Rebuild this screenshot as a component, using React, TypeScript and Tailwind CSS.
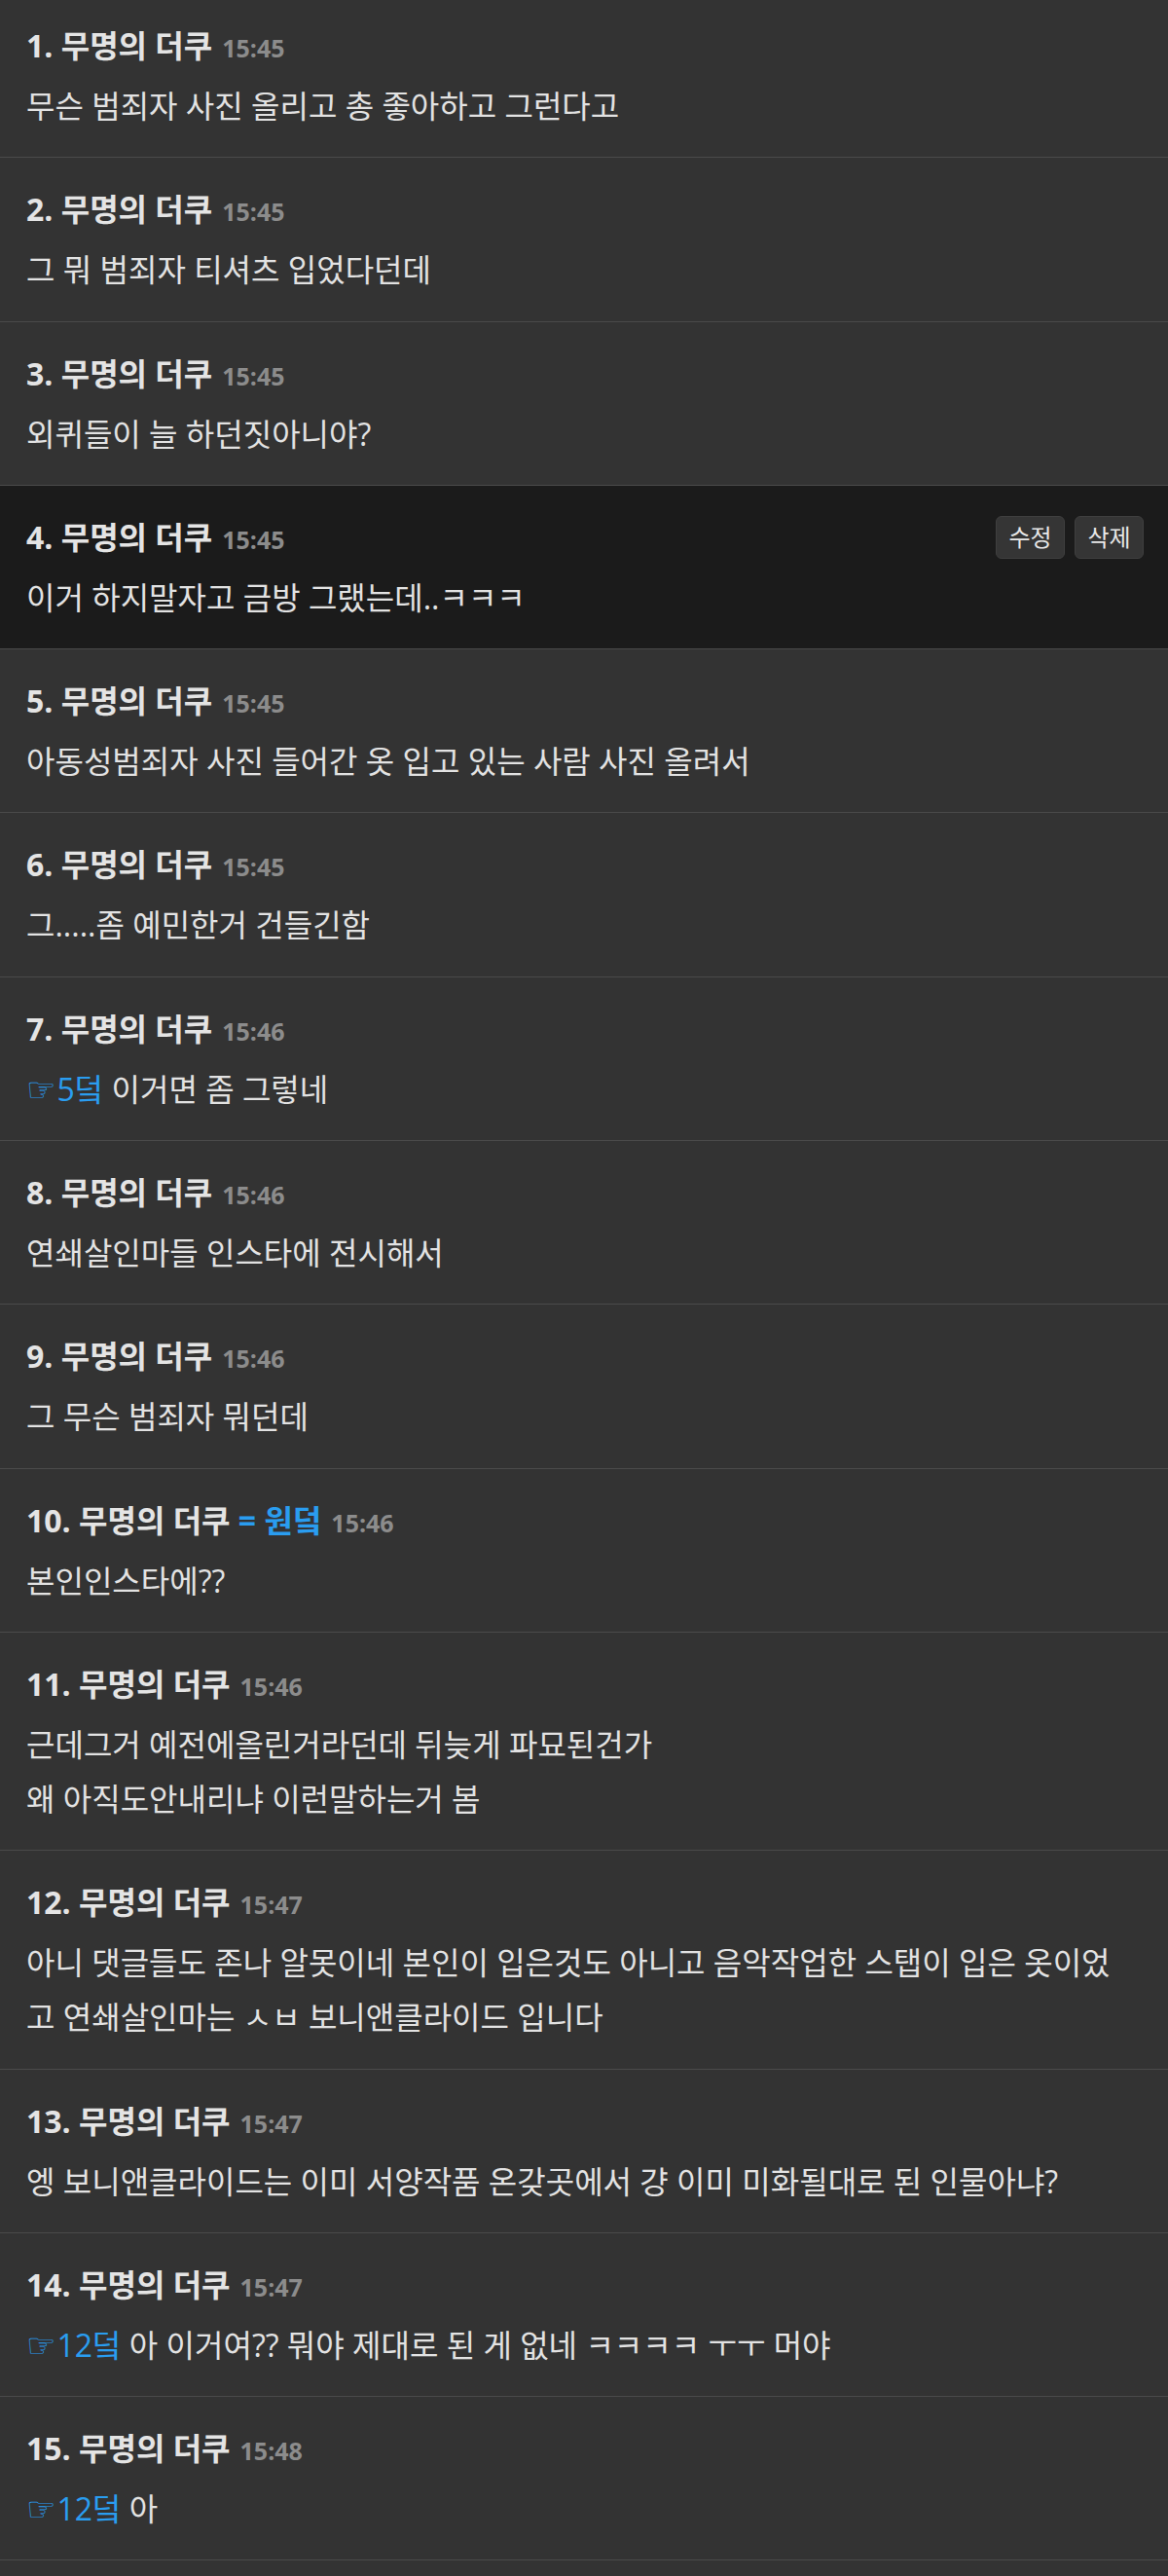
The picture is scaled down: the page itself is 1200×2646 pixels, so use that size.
import { Fragment } from "react";

type Part = string | { ref: string };

type Comment = {
  no: number;
  time: string;
  op?: boolean;
  mine?: boolean;
  body: Part[][];
};

const comments: Comment[] = [
  { no: 1, time: "15:45", body: [["무슨 범죄자 사진 올리고 총 좋아하고 그런다고"]] },
  { no: 2, time: "15:45", body: [["그 뭐 범죄자 티셔츠 입었다던데"]] },
  { no: 3, time: "15:45", body: [["외퀴들이 늘 하던짓아니야?"]] },
  { no: 4, time: "15:45", mine: true, body: [["이거 하지말자고 금방 그랬는데..ㅋㅋㅋ"]] },
  { no: 5, time: "15:45", body: [["아동성범죄자 사진 들어간 옷 입고 있는 사람 사진 올려서"]] },
  { no: 6, time: "15:45", body: [["그.....좀 예민한거 건들긴함"]] },
  { no: 7, time: "15:46", body: [[{ ref: "5덬" }, " 이거면 좀 그렇네"]] },
  { no: 8, time: "15:46", body: [["연쇄살인마들 인스타에 전시해서"]] },
  { no: 9, time: "15:46", body: [["그 무슨 범죄자 뭐던데"]] },
  { no: 10, time: "15:46", op: true, body: [["본인인스타에??"]] },
  {
    no: 11,
    time: "15:46",
    body: [["근데그거 예전에올린거라던데 뒤늦게 파묘된건가"], ["왜 아직도안내리냐 이런말하는거 봄"]],
  },
  {
    no: 12,
    time: "15:47",
    body: [
      ["아니 댓글들도 존나 알못이네 본인이 입은것도 아니고 음악작업한 스탭이 입은 옷이었"],
      ["고 연쇄살인마는 ㅅㅂ 보니앤클라이드 입니다"],
    ],
  },
  { no: 13, time: "15:47", body: [["엥 보니앤클라이드는 이미 서양작품 온갖곳에서 걍 이미 미화될대로 된 인물아냐?"]] },
  { no: 14, time: "15:47", body: [[{ ref: "12덬" }, " 아 이거여?? 뭐야 제대로 된 게 없네 ㅋㅋㅋㅋ ㅜㅜ 머야"]] },
  { no: 15, time: "15:48", body: [[{ ref: "12덬" }, " 아"]] },
];

function Line({ parts }: { parts: Part[] }) {
  return (
    <div className="h-[56px] leading-[56px] whitespace-nowrap">
      {parts.map((p, i) =>
        typeof p === "string" ? (
          <Fragment key={i}>{p}</Fragment>
        ) : (
          <span key={i} className="text-[#2a9df0]">
            <span className="font-['DejaVu_Sans'] text-[34px] leading-none mr-[1px]">☞</span>
            {p.ref}
          </span>
        )
      )}
    </div>
  );
}

function Row({ c }: { c: Comment }) {
  return (
    <div
      className={`border-b border-[#4a4a4a] pl-[27px] pr-[25px] pt-[30px] pb-[24.3px] ${
        c.mine ? "bg-[#1b1b1b]" : "bg-[#333333]"
      }`}
    >
      <div className="flex items-center justify-between h-[46px]">
        <div className="flex items-baseline gap-[10px]">
          <span className="text-[32px] font-bold text-[#e4e4e4]">
            {c.no}. 무명의 더쿠
            {c.op && <span className="text-[#2a9df0]"> = 원덬</span>}
          </span>
          <span className="text-[25px] font-bold text-[#8c8c8c]">{c.time}</span>
        </div>
        {c.mine && (
          <div className="flex gap-[10px]">
            <button className="h-[44px] w-[71px] rounded-[6px] border border-[#3f3f3f] bg-[#353535] text-[24px] text-[#e8e8e8]">
              수정
            </button>
            <button className="h-[44px] w-[71px] rounded-[6px] border border-[#3f3f3f] bg-[#353535] text-[24px] text-[#e8e8e8]">
              삭제
            </button>
          </div>
        )}
      </div>
      <div className="mt-[11px] text-[32px] text-[#e2e2e2]">
        {c.body.map((l, i) => (
          <Line key={i} parts={l} />
        ))}
      </div>
    </div>
  );
}

export default function App() {
  return (
    <div className="h-[2646px] bg-[#333333] font-['Open_Sans','Noto_Sans_CJK_KR',sans-serif] overflow-hidden">
      <div className="-mt-[6px]">
        {comments.map((c) => (
          <Row key={c.no} c={c} />
        ))}
      </div>
    </div>
  );
}
